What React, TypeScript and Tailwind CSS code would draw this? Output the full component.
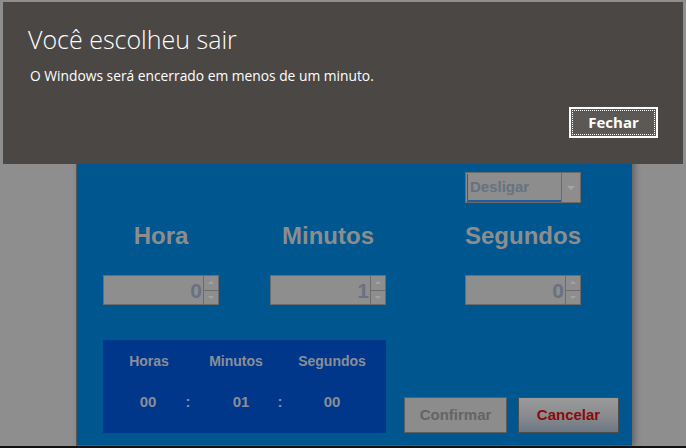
import { ChevronDown } from "lucide-react";

const sans = { fontFamily: '"Liberation Sans", Arial, sans-serif' };

function Spinner() {
  return (
    <div className="flex h-full w-[16px] flex-col">
      <div className="flex flex-1 items-center justify-center border border-[#6c6c6c] bg-[#8e8e8e]">
        <div className="h-0 w-0 border-x-[3px] border-b-[3px] border-x-transparent border-b-[#a3a3a3]" />
      </div>
      <div className="flex flex-1 items-center justify-center border border-t-0 border-[#6c6c6c] bg-[#8e8e8e]">
        <div className="h-0 w-0 border-x-[3px] border-t-[3px] border-x-transparent border-t-[#a3a3a3]" />
      </div>
    </div>
  );
}

function NumberBox({ value }: { value: string }) {
  return (
    <div className="flex h-[30px] w-[116px]">
      <div className="flex flex-1 items-center justify-end border border-r-0 border-[#6c6c6c] bg-[#8e8e8e] pr-[1px] text-[21px] font-bold leading-none text-[#677282]">
        {value}
      </div>
      <Spinner />
    </div>
  );
}

function Heading({ children }: { children: string }) {
  return (
    <div className="w-[116px] whitespace-nowrap text-center text-[24px] font-bold leading-[28px] text-[#8d8d8d]">
      {children}
    </div>
  );
}

export default function App() {
  return (
    <div
      className="relative h-[448px] w-[686px] overflow-hidden bg-[#8e8e8e]"
      style={sans}
    >
      {/* app window */}
      <div className="absolute left-[76px] top-[100px] h-[346px] w-[556px] border-b border-l border-[#4f5a63] bg-[#00578f] pt-[72px] shadow-[3px_0_6px_rgba(0,0,0,0.3)]">
        <div className="pl-[26px]">
          <div className="flex">
            <div className="ml-[362px] flex h-[31px] w-[116px] border border-[#6a6a6a] bg-[#8d8d8d]">
              <div className="ml-[1px] mt-[1px] flex flex-1 items-center border-b-2 border-l border-[#1f5f9e] pl-[2px] text-[15px] font-bold text-[#66727f]">
                Desligar
              </div>
              <div className="flex w-[19px] items-center justify-center border-l border-[#6a6a6a]">
                <div className="h-0 w-0 border-x-[4px] border-t-[4px] border-x-transparent border-t-[#a5a5a5]" />
              </div>
            </div>
          </div>

          <div className="mt-[19px] flex">
            <Heading>Hora</Heading>
            <div className="ml-[51px]">
              <Heading>Minutos</Heading>
            </div>
            <div className="ml-[79px]">
              <Heading>Segundos</Heading>
            </div>
          </div>

          <div className="mt-[25px] flex">
            <NumberBox value="0" />
            <div className="ml-[51px]">
              <NumberBox value="1" />
            </div>
            <div className="ml-[79px]">
              <NumberBox value="0" />
            </div>
          </div>

          <div className="mt-[35px] flex items-end">
            <div className="h-[93px] w-[283px] bg-[#00378a] text-[14px] font-bold text-[#8a8e98]">
              <div className="flex pl-[8px] pt-[11px] leading-[20px]">
                <div className="w-[76px] text-center">Horas</div>
                <div className="ml-[11px] w-[76px] text-center">Minutos</div>
                <div className="ml-[20px] w-[76px] text-center">Segundos</div>
              </div>
              <div className="mt-[21px] flex pl-[30px] text-[15px] leading-[20px]">
                <div className="w-[30px] text-center">00</div>
                <div className="ml-[20px] w-[10px] text-center">:</div>
                <div className="ml-[33px] w-[30px] text-center">01</div>
                <div className="ml-[19px] w-[10px] text-center">:</div>
                <div className="ml-[32px] w-[30px] text-center">00</div>
              </div>
            </div>
            <button className="ml-[18px] h-[36px] w-[103px] border border-[#5e5e5e] bg-[#8c8c8c] text-[15px] font-bold text-[#646464]">
              Confirmar
            </button>
            <button className="ml-[11px] h-[36px] w-[101px] border border-[#4d4d4d] bg-gradient-to-b from-[#9a9a9a] via-[#8a8c90] to-[#6d7784] text-[15px] font-bold text-[#8a0a0a]">
              Cancelar
            </button>
          </div>
        </div>
      </div>

      {/* bottom black strip */}
      <div className="absolute bottom-0 left-0 h-[2px] w-full bg-[#111]" />

      {/* shutdown notice banner */}
      <div
        className="absolute left-[3px] top-[2px] flex h-[162px] w-[680px] flex-col bg-[#4b4745] pl-[25px] pr-[25px] text-white"
        style={{ fontFamily: '"Segoe UI", "Open Sans", "Noto Sans", sans-serif' }}
      >
        <div className="mt-[20px] text-[25px] font-light leading-[34px]">
          Você escolheu sair
        </div>
        <div className="ml-[2px] mt-[10px] text-[13.8px] leading-[20px]">
          O Windows será encerrado em menos de um minuto.
        </div>
        <div className="mt-[21px] flex justify-end">
          <button className="h-[31px] w-[89px] border-2 border-white bg-[#5b5856] p-[1px]">
            <div className="flex h-full w-full items-center justify-center border border-dotted border-white text-[15px] font-bold leading-none text-white">
              Fechar
            </div>
          </button>
        </div>
      </div>
    </div>
  );
}
